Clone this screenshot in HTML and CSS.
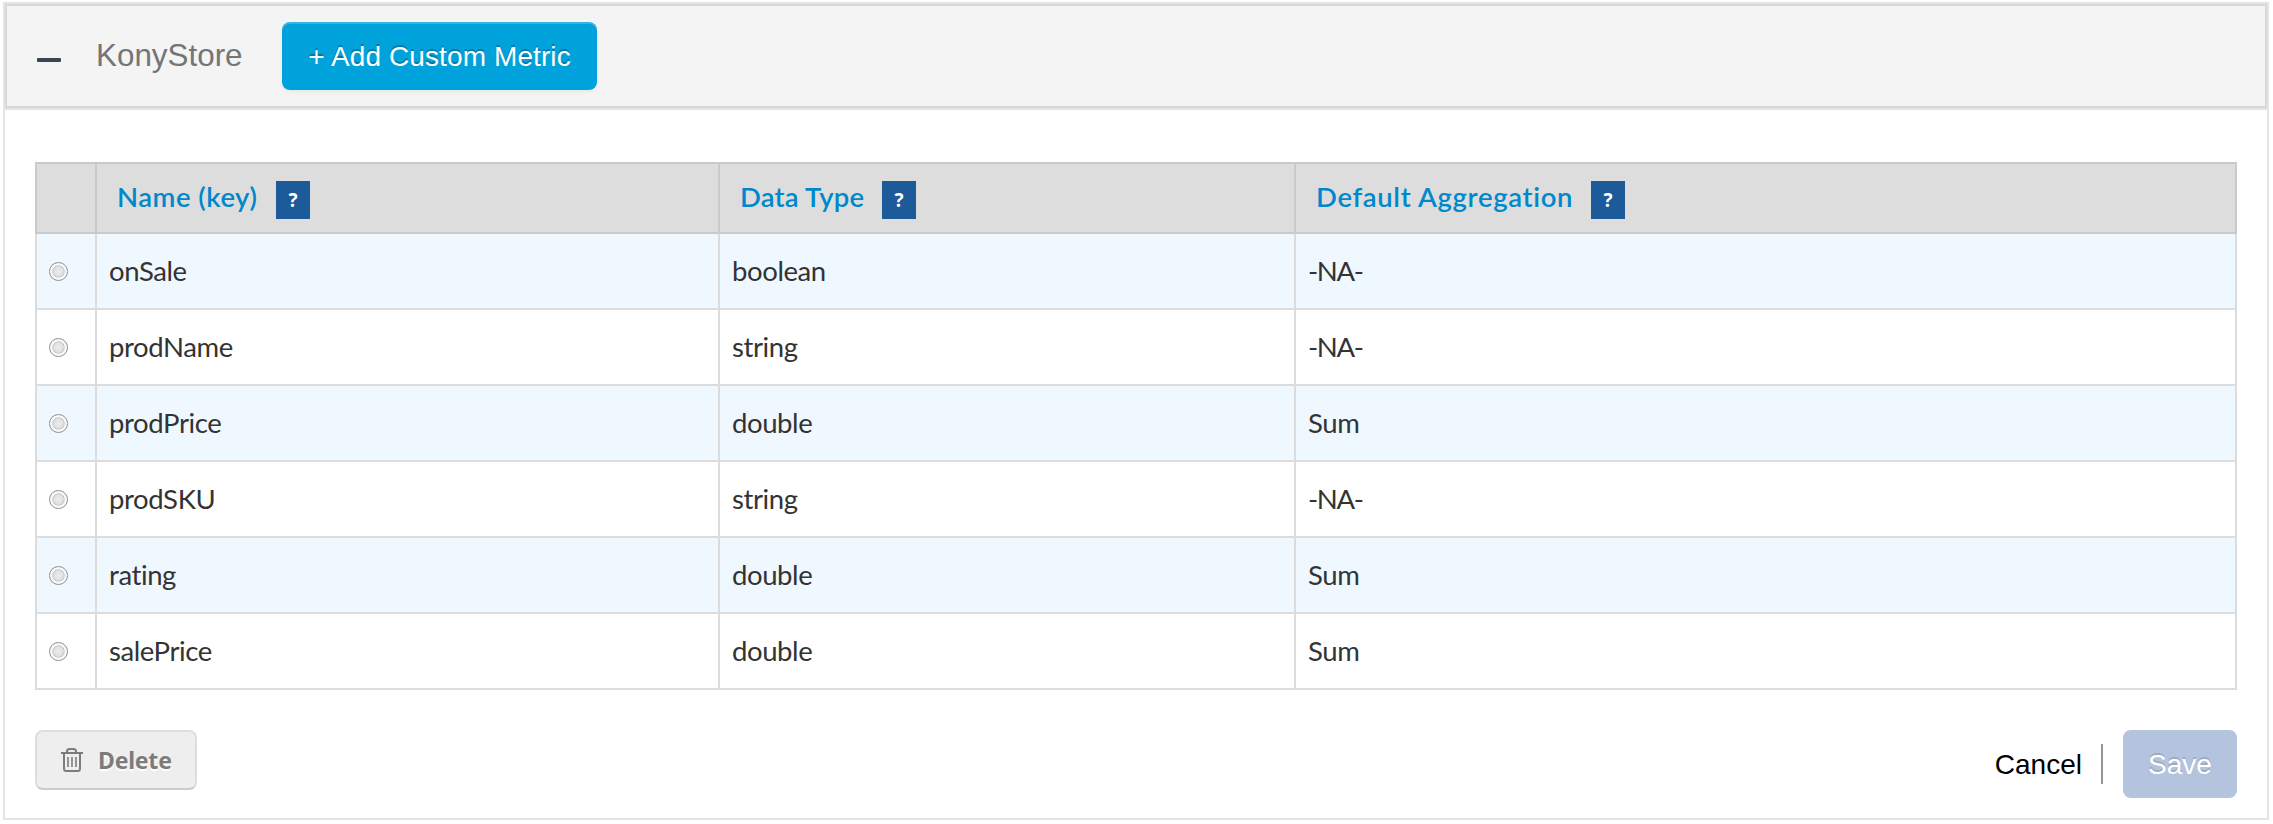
FILE: index.html
```html
<!DOCTYPE html>
<html lang="en">
<head>
<meta charset="utf-8">
<title>KonyStore</title>
<link rel="stylesheet" href="styles.css">
</head>
<body>
<section class="panel">
  <header class="panel-head">
    <span class="collapse"></span>
    <h1 class="title">KonyStore</h1>
    <button class="btn btn-add">+ Add Custom Metric</button>
  </header>
  <div class="panel-body">
    <table class="metrics">
      <colgroup><col class="c-pick"><col class="c-name"><col class="c-type"><col class="c-agg"></colgroup>
      <thead>
        <tr>
          <th></th>
          <th><div class="th"><span class="label l-name">Name (key)</span><span class="help">?</span></div></th>
          <th><div class="th"><span class="label l-type">Data Type</span><span class="help">?</span></div></th>
          <th><div class="th"><span class="label l-agg">Default Aggregation</span><span class="help">?</span></div></th>
        </tr>
      </thead>
      <tbody>
        <tr><td><i class="radio"></i></td><td>onSale</td><td>boolean</td><td class="na">-NA-</td></tr>
        <tr><td><i class="radio"></i></td><td>prodName</td><td>string</td><td class="na">-NA-</td></tr>
        <tr><td><i class="radio"></i></td><td>prodPrice</td><td>double</td><td>Sum</td></tr>
        <tr><td><i class="radio"></i></td><td>prodSKU</td><td>string</td><td class="na">-NA-</td></tr>
        <tr><td><i class="radio"></i></td><td>rating</td><td>double</td><td>Sum</td></tr>
        <tr><td><i class="radio"></i></td><td>salePrice</td><td>double</td><td>Sum</td></tr>
      </tbody>
    </table>
    <footer class="actions">
      <button class="btn-delete">
        <svg class="trash" width="22" height="24" viewBox="0 0 22 24" fill="none" stroke="#7c7c7c" stroke-width="2">
          <path d="M0 5H22M6 5V3.5Q6 1 8.500 1H12.500Q15 1 15 3.500V5M3 5V20.500Q3 23 5.500 23H16.500Q19 23 19 20.500V5"/>
          <path d="M7 9V19M11 9V19M15 9V19" stroke-width="1.600"/>
        </svg>
        <span>Delete</span>
      </button>
      <div class="confirm">
        <a class="cancel">Cancel</a>
        <span class="divider"></span>
        <button class="btn btn-save">Save</button>
      </div>
    </footer>
  </div>
</section>
</body>
</html>
```
FILE: styles.css
```css
* { box-sizing: border-box; }
body { margin: 0; background: #fff; font-family: "Lato", sans-serif; color: #333; }
button { font: inherit; margin: 0; border: 0; }
.panel { width: 2266px; height: 818px; margin: 2px 0 0 3px; border: 2px solid #e4e4e4; }
.panel-head {
  display: flex; align-items: flex-start; height: 104px; padding: 16px 0 0 30px;
  border: 2px solid #d8d8d8; background: #f4f4f4; box-shadow: 0 2px 0 #e4e4e4;
}
.collapse { width: 24px; height: 4px; margin-top: 36px; border-radius: 1px; background: #3b4654; }
.title {
  width: 184px; margin: 0 0 0 35px; font: 400 31.4px/68px "Liberation Sans", sans-serif;
  color: #757575; white-space: nowrap;
}
.btn {
  height: 68px; padding: 0; border-radius: 8px; color: #fff; white-space: nowrap;
  font: 400 28px/70px "Liberation Sans", sans-serif; text-align: center;
}
.btn-add {
  width: 315px; margin-left: 2px; background: #00a2dc; text-shadow: 0 -2px 0 rgba(0,0,0,.25);
  box-shadow: inset 0 2px 0 rgba(255,255,255,.2), 0 2px 4px rgba(0,0,0,.05);
  letter-spacing: .1px;
}
.panel-body { padding: 54px 30px 0; }
.metrics { width: 2202px; table-layout: fixed; border-collapse: collapse; }
.c-pick { width: 60px; }
.c-name { width: 623px; }
.c-type { width: 576px; }
.metrics th, .metrics td { height: 76px; padding: 0 0 0 12px; border: 2px solid #dcdcdc; text-align: left; }
.metrics th { height: 70px; padding-left: 20px; border-color: #cacaca; background: #ddd; }
.metrics td { font-size: 27.500px; line-height: 40px; letter-spacing: -.4px; }
.metrics td.na { letter-spacing: -1.4px; }
.metrics tbody tr:nth-child(odd) { background: #f0f8ff; }
.th { display: flex; align-items: center; height: 68px; }
.label {
  font-size: 27.500px; font-weight: 600; line-height: 64px; letter-spacing: .5px;
  color: #0088cc; white-space: nowrap; padding-bottom: 2px;
}
.l-name { width: 159px; }
.l-type { width: 142px; letter-spacing: .2px; }
.l-agg { width: 275px; letter-spacing: .65px; }
.help {
  width: 34px; height: 38px; margin-top: 4px; background: #1c5a99; color: #fff;
  font: 700 19px/38px "Noto Sans", sans-serif; text-align: center;
}
.radio {
  display: block; width: 19px; height: 19px; border: 1px solid #8e8f8f; border-radius: 50%;
  background: radial-gradient(circle at 50% 50%, #ececee 0, #dfe1e4 4.500px, #c4c7cb 5.800px, #fafafa 6.500px);
}
.actions { display: flex; justify-content: space-between; margin-top: 40px; }
.btn-delete {
  display: flex; align-items: center; width: 162px; height: 60px; padding: 0 0 0 24px;
  border: 2px solid #ddd; border-bottom-color: #cbcbcb; border-radius: 8px; background: #eee;
  font: 700 23px/32px "Noto Sans", sans-serif; letter-spacing: -.2px;
  color: #7c7c7c; text-shadow: 0 2px 2px #fff;
}
.btn-delete span { margin-left: 15px; }
.confirm { display: flex; }
.cancel { margin-right: -1px; color: #000; font: 400 28px/70px "Liberation Sans", sans-serif; }
.divider { width: 2px; height: 40px; margin: 14px 20px 0; background: #9b9296; }
.btn-save { width: 114px; background: #b4c3de; text-shadow: 0 -2px 0 rgba(0,0,0,.15); }
```
